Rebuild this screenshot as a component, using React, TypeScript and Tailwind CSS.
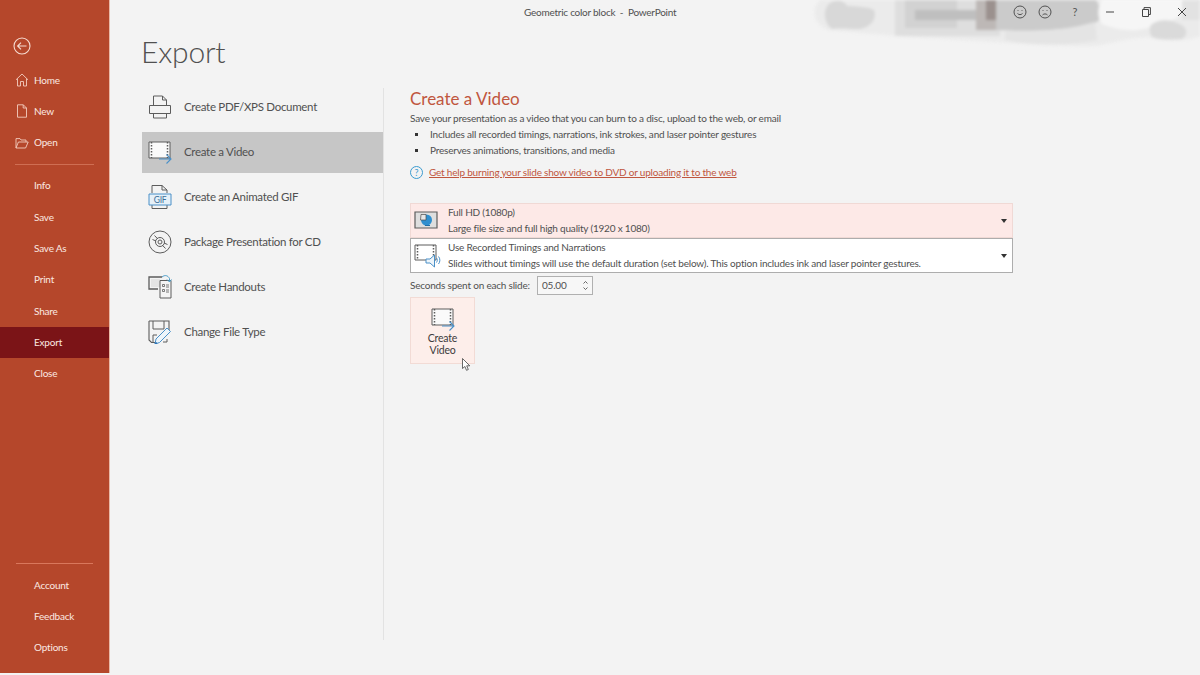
import React from 'react';

const font = { fontFamily: 'Lato, Roboto, sans-serif' };

const BackIcon = () => (
  <svg width="18" height="18" viewBox="0 0 18 18" fill="none" stroke="#f6dcd2" strokeWidth="1.1">
    <circle cx="9" cy="9" r="8" />
    <path d="M13.5 9H4.8M8 5.6 4.6 9 8 12.4" />
  </svg>
);

const HomeIcon = () => (
  <svg width="14" height="14" viewBox="0 0 14 14" fill="none" stroke="#f3cdbf" strokeWidth="0.9">
    <path d="M1 6.8 7 1l6 5.8M2.5 5.6V13h3V8.5h3V13h3V5.6" />
  </svg>
);

const NewIcon = () => (
  <svg width="14" height="14" viewBox="0 0 14 14" fill="none" stroke="#f3cdbf" strokeWidth="0.9">
    <path d="M2.5.8h5.8l3.2 3.2v9.2h-9zM8.2.8V4h3.3" />
  </svg>
);

const OpenIcon = () => (
  <svg width="14" height="14" viewBox="0 0 14 14" fill="none" stroke="#f3cdbf" strokeWidth="0.9">
    <path d="M1 12V2.6h4l1 1.4h5v2M1 12h9.6l2.6-6H3.400z" />
  </svg>
);

const PdfIcon = () => (
  <svg width="24" height="24" viewBox="0 0 24 24" fill="none" stroke="#5c5c5c" strokeWidth="1">
    <path d="M5.500 10V1h9l4 4v5M14.500 1v4h4" />
    <path d="M1.500 10.500h21v8h-21zM5.500 18.500V23h13v-4.500" />
  </svg>
);

const VideoIcon = () => (
  <svg width="24" height="24" viewBox="0 0 24 24" fill="none">
    <path d="M1 2h21v16H1z" fill="#fafafa" stroke="#5c5c5c" />
    <path d="M3.500 2v16M19.500 2v16" stroke="#5c5c5c" strokeDasharray="1.500 1.500" strokeWidth="1.500" />
    <path d="M11 19h12M18.500 14.500 23 19l-4.500 4.500" stroke="#4a90c8" strokeWidth="1.100" />
  </svg>
);

const GifIcon = () => (
  <svg width="24" height="24" viewBox="0 0 24 24" fill="none">
    <path d="M4 8V0.500h10l5 4.500v3M14 0.500V5h5M4 20v3.500h15V20" stroke="#5c5c5c" />
    <path d="M1 9h22v11H1z" fill="#e5f0f8" stroke="#4a90c8" />
    <text x="12" y="18" textAnchor="middle" fontSize="8.500" fill="#3d6f99" fontFamily="Lato">GIF</text>
  </svg>
);

const CdIcon = () => (
  <svg width="24" height="24" viewBox="0 0 24 24" fill="none" stroke="#5c5c5c" strokeWidth="1">
    <circle cx="12" cy="12" r="11" />
    <circle cx="12" cy="12" r="4.500" />
    <circle cx="12" cy="12" r="2" />
    <path d="M4.500 9.500 8 11M6.500 5.500l3.300 3.500M19.500 14.500 16 13M17.500 18.500 14.200 15" />
  </svg>
);

const HandoutIcon = () => (
  <svg width="24" height="24" viewBox="0 0 24 24" fill="none">
    <path d="M10 14H1V2h13" stroke="#5c5c5c" strokeWidth="1.300" />
    <path d="M3 4h9v8H3z" fill="#e4e4e4" />
    <path d="M12 5.500h11V23H12z" fill="#f4f4f4" stroke="#5c5c5c" />
    <path d="M14.500 9.500h2v2h-2zM14.500 14.500h2v2h-2zM18 10h3M18 12h3M18 15h3M18 17h3" stroke="#5c5c5c" strokeWidth="0.800" />
    <path d="M14 2c3-2.500 6-1.500 7.500 1.500v3M19 4.500l2.500 2.500 2-2.500" stroke="#4a9cc8" />
  </svg>
);

const ChangeTypeIcon = () => (
  <svg width="24" height="24" viewBox="0 0 24 24" fill="none">
    <path d="M1 1h20v11M1 1v19l2.500 2.500H9" stroke="#5c5c5c" strokeWidth="1.100" />
    <path d="M5 1v8h11V1M5 22v-7h4M19 19v3h-4" stroke="#5c5c5c" />
    <path d="m8 19 11-11 3.500 3.500-11 11L7 24z" fill="#eef5fa" stroke="#4a90c8" />
    <path d="m7 24 2-1" stroke="#2e74b5" strokeWidth="2" />
  </svg>
);

const HdIcon = () => (
  <svg width="24" height="20" viewBox="0 0 24 20">
    <path d="M1 1h22v16H1z" fill="#dedede" stroke="#5c5c5c" strokeWidth="1.200" />
    <circle cx="12.500" cy="9" r="5.500" fill="#2f8fcf" />
    <path d="M7 3.500h5V9H6.500z" fill="#e6e6e6" stroke="#4c4c4c" strokeWidth="0.700" />
    <path d="M11 14.500h5" stroke="#1f6ea5" />
  </svg>
);

const TimingIcon = () => (
  <svg width="27" height="24" viewBox="0 0 27 24" fill="none">
    <path d="M1 1h21v15H1z" fill="#fff" stroke="#5c5c5c" />
    <path d="M3.500 1v15M19.500 1v15" stroke="#5c5c5c" strokeDasharray="1.500 1.500" strokeWidth="1.500" />
    <path d="M12 15h4l4.500-4v12L16 19h-4z" fill="#eef5fa" stroke="#4a90c8" />
    <path d="M22.500 14c1 1.200 1 3 0 4.500M24.500 12.500c1.800 2 1.800 5.500 0 7.500" stroke="#4a90c8" />
  </svg>
);

const CaretIcon = () => (
  <svg width="6" height="4" viewBox="0 0 6 4">
    <path d="M0 0h6L3 4z" fill="#333" />
  </svg>
);

const Cursor = () => (
  <svg width="9" height="13" viewBox="0 0 9 13">
    <path d="M.5.500v10l2.400-2 1.600 3.800 1.800-.8-1.600-3.700h3.100z" fill="#fff" stroke="#444" strokeWidth="0.800" />
  </svg>
);

// blurred wallpaper strip behind the window controls
const TitleArt = () => (
  <svg width="400" height="50" viewBox="0 0 400 50" className="absolute top-0 right-0 blur-[1.500px]">
    <path d="M20 0h380v36c-10 4-24 6-40 2-30-4-50 8-72 8-40 0-120-6-160-8-40-2-70-6-100-8-14-6-18-20-8-30z" fill="#ebebeb" />
    <path d="M30 3c8-5 16-1 17 3 8 0 22 1 27 4 3 8-2 17-14 19-10 0-20-1-28 0-8-6-10-20-2-26z" fill="#d8d8d8" />
    <path d="M95 0h105v36H95z" fill="#dedede" />
    <path d="M105 0h52v28h-52z" fill="#d2d2d2" />
    <path d="M115 10h85v10h-85z" fill="#bfbfbf" />
    <path d="M176 0h20v30h-20z" fill="#bdb8b6" />
    <path d="M186 0h11v20h-11z" fill="#9b918e" />
    <path d="M196 0h100c4 6 6 14 3 20-8 8-34 8-50 10-14 1-32 1-53 0z" fill="#cbcbcb" />
    <path d="M302 0h80c6 8-2 18-10 20-12 6-24 8-34 10-14 1-26-2-36-6-6-8-4-18 0-24z" fill="#f6f6f6" />
    <path d="M352 24c12-7 24-3 32 3 4 4 2 10-2 12-12 1-24 1-30-2-3-5-3-10 0-13z" fill="#dadada" />
    <path d="M382 0h18v20h-18z" fill="#e2e2e2" />
    <path d="M205 30c30 4 60 0 90-8l2 18c-30 6-66 6-92 0z" fill="#e4e4e4" />
  </svg>
);

const WindowControls = () => (
  <div className="absolute top-0 right-0 h-6 flex items-center text-[#555]">
    <div className="flex items-center gap-[11px] mr-[17px]">
      <svg width="14" height="14" viewBox="0 0 14 14" fill="none" stroke="#444" strokeWidth="0.900">
        <circle cx="7" cy="7" r="6" />
        <path d="M4.500 8.500c1.500 1.500 3.500 1.500 5 0M5 5v.800M9 5v.800" />
      </svg>
      <svg width="14" height="14" viewBox="0 0 14 14" fill="none" stroke="#444" strokeWidth="0.900">
        <circle cx="7" cy="7" r="6" />
        <path d="M4.500 10c1.500-1.500 3.500-1.500 5 0M5 5v.800M9 5v.800" />
      </svg>
    </div>
    <span className="text-[11px] w-[12px] mr-[24px] text-center">?</span>
    <svg width="10" height="10" viewBox="0 0 10 10" className="mr-[26px]" fill="none" stroke="#444">
      <path d="M1 5h8" />
    </svg>
    <svg width="10" height="10" viewBox="0 0 10 10" className="mr-[26px]" fill="none" stroke="#444">
      <path d="M1.500 2.500h6v7h-6zM3 2.500V.600h6.400v6.900H7.500" />
    </svg>
    <svg width="10" height="10" viewBox="0 0 10 10" className="mr-[13px]" fill="none" stroke="#444">
      <path d="m1 1 8 8M9 1 1 9" />
    </svg>
  </div>
);

const NavRow = ({ label, icon, active }: { label: string; icon?: React.ReactNode; active?: boolean }) => (
  <div className={`h-[31.300px] flex items-center text-[10px] tracking-[-0.200px] text-[#fbe9e2] ${active ? 'bg-[#7b1417]' : ''}`}>
    <div className="w-[34px] pl-[15px] shrink-0 flex items-center">{icon}</div>
    <span>{label}</span>
  </div>
);

const exportItems: { label: string; icon: React.ReactNode; active?: boolean }[] = [
  { label: 'Create PDF/XPS Document', icon: <PdfIcon /> },
  { label: 'Create a Video', icon: <VideoIcon />, active: true },
  { label: 'Create an Animated GIF', icon: <GifIcon /> },
  { label: 'Package Presentation for CD', icon: <CdIcon /> },
  { label: 'Create Handouts', icon: <HandoutIcon /> },
  { label: 'Change File Type', icon: <ChangeTypeIcon /> },
];

export default function App() {
  return (
    <div className="w-[1200px] h-[675px] flex overflow-hidden bg-[#f3f3f3] text-[#505050]" style={font}>
      {/* Backstage nav */}
      <aside className="w-[110px] h-[673px] shrink-0 bg-[#b5472b] border-r border-[#e9b9a8] flex flex-col pt-[32px] pb-[9.500px]">
        <div className="pl-[13px] h-[28px] mb-[4.400px] flex items-center">
          <BackIcon />
        </div>
        <NavRow label="Home" icon={<HomeIcon />} />
        <NavRow label="New" icon={<NewIcon />} />
        <NavRow label="Open" icon={<OpenIcon />} />
        <div className="mx-[15px] my-[5.500px] h-px bg-[#cf6e53]" />
        <NavRow label="Info" />
        <NavRow label="Save" />
        <NavRow label="Save As" />
        <NavRow label="Print" />
        <NavRow label="Share" />
        <NavRow label="Export" active />
        <NavRow label="Close" />
        <div className="flex-1" />
        <div className="mx-[16px] my-[6px] h-px bg-[#d9775c]" />
        <NavRow label="Account" />
        <NavRow label="Feedback" />
        <NavRow label="Options" />
      </aside>

      <main className="relative flex-1 min-w-0">
        <TitleArt />
        <WindowControls />
        <div className="absolute top-0 left-[414px] h-6 flex items-center text-[10px] tracking-[-0.250px] whitespace-pre">
          Geometric color block  -  PowerPoint
        </div>

        <div className="flex flex-col pl-[31px] pt-[30px]">
          <h1 className="h-[54px] text-[30px] leading-[42px] font-light tracking-[-0.200px]">Export</h1>

          <div className="flex">
            {/* Export options */}
            <div className="w-[241px] ml-px shrink-0">
              {exportItems.map((item) => (
                <div
                  key={item.label}
                  className={`flex items-center pl-[6px] gap-[12px] text-[11.500px] tracking-[-0.300px] ${item.active ? 'h-[41px] mt-[3px] mb-[1px] pb-[2px] bg-[#c6c6c6]' : 'h-[45px]'}`}
                >
                  <div className="w-[24px] h-[24px] shrink-0 flex items-center">{item.icon}</div>
                  <span>{item.label}</span>
                </div>
              ))}
            </div>
            <div className="w-px h-[552px] mt-[4px] bg-[#e2e2e2] shrink-0" />

            {/* Create a video pane */}
            <div className="pl-[26px] w-[629px] shrink-0 pt-[4px] text-[10px] tracking-[-0.200px]">
              <h2 className="text-[17px] leading-[22px] tracking-normal text-[#c0563e]">Create a Video</h2>
              <p className="leading-[15px] mt-[1px]">
                Save your presentation as a video that you can burn to a disc, upload to the web, or email
              </p>
              <ul>
                <li className="h-[16px] flex items-center">
                  <span className="w-[3px] h-[3px] bg-[#333] ml-[5px] mr-[12px]" />
                  Includes all recorded timings, narrations, ink strokes, and laser pointer gestures
                </li>
                <li className="h-[16px] flex items-center">
                  <span className="w-[3px] h-[3px] bg-[#333] ml-[5px] mr-[12px]" />
                  Preserves animations, transitions, and media
                </li>
              </ul>
              <div className="flex items-center h-[14px] mt-[7px]">
                <span className="w-[13px] h-[13px] rounded-full border border-[#3a9bd0] text-[#3a9bd0] text-[9px] leading-[11px] text-center mr-[6px]">?</span>
                <span className="text-[#c0563e] underline">Get help burning your slide show video to DVD or uploading it to the web</span>
              </div>

              <div className="mt-[24px] h-[35px] w-[603px] bg-[#fde9e7] border border-[#f0d9d5] flex items-center">
                <div className="w-[37px] pl-[3px] shrink-0">
                  <HdIcon />
                </div>
                <div className="flex-1 leading-[15.500px]">
                  <div>Full HD (1080p)</div>
                  <div>Large file size and full high quality (1920 x 1080)</div>
                </div>
                <div className="pr-[5px]"><CaretIcon /></div>
              </div>
              <div className="h-[35px] w-[603px] bg-white border border-[#adadad] flex items-center">
                <div className="w-[37px] pl-[3px] shrink-0">
                  <TimingIcon />
                </div>
                <div className="flex-1 leading-[15.500px]">
                  <div>Use Recorded Timings and Narrations</div>
                  <div>Slides without timings will use the default duration (set below). This option includes ink and laser pointer gestures.</div>
                </div>
                <div className="pr-[5px]"><CaretIcon /></div>
              </div>

              <div className="mt-[3px] h-[19px] flex items-center">
                <span className="w-[127px] whitespace-nowrap">Seconds spent on each slide:</span>
                <div className="w-[56px] h-[19px] bg-[#f7f7f7] border border-[#b0b0b0] flex items-center justify-between pl-[4px] pr-[4px]">
                  <span>05.00</span>
                  <span className="flex flex-col gap-[3px]">
                    <svg width="5" height="3" viewBox="0 0 5 3" fill="none" stroke="#444" strokeWidth="0.800"><path d="M.5 2.500 2.500.5l2 2" /></svg>
                    <svg width="5" height="3" viewBox="0 0 5 3" fill="none" stroke="#444" strokeWidth="0.800"><path d="M.5.5l2 2 2-2" /></svg>
                  </span>
                </div>
              </div>

              <div className="relative mt-[2px] w-[65px] h-[67px] bg-[#fdeeea] border border-[#f2dbd5] flex flex-col items-center pt-[9px]">
                <VideoIcon />
                <div className="text-[10.500px] leading-[12px] text-center text-[#3c3c3c] mt-[1px]">
                  Create
                  <br />
                  Video
                </div>
                <div className="absolute left-[51px] top-[60px]">
                  <Cursor />
                </div>
              </div>
            </div>
          </div>
        </div>
      </main>
    </div>
  );
}
